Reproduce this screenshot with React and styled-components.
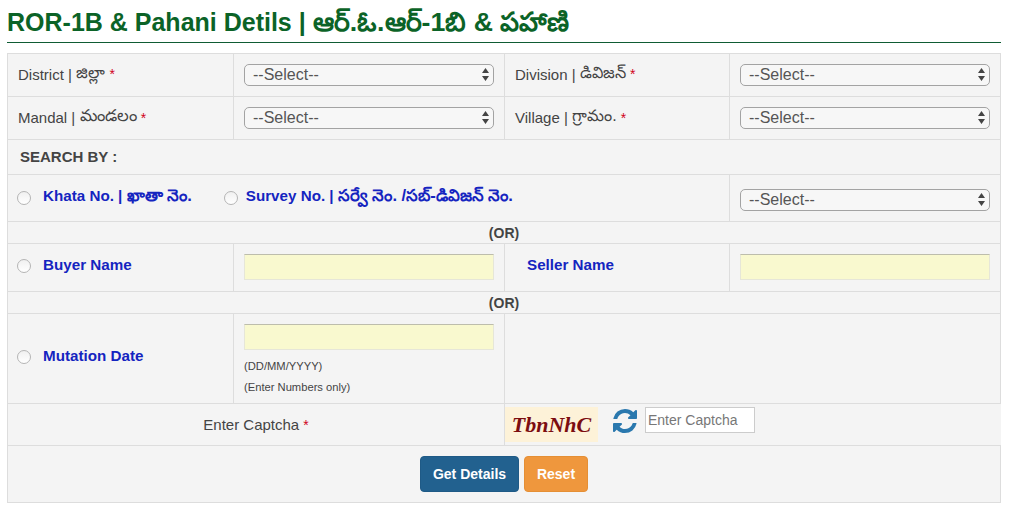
import React from "react";
import styled, { createGlobalStyle } from "styled-components";

const Global = createGlobalStyle`
  html, body { margin: 0; padding: 0; background: #fff; }
  body { font-family: "Liberation Sans", "Noto Sans", sans-serif; color: #444; }
  * { box-sizing: border-box; }
`;

const Page = styled.div`
  width: 1010px;
  height: 505px;
  padding: 0 9px 0 7px;
  overflow: hidden;
`;
const Title = styled.h1`
  margin: 0;
  height: 43px;
  padding-top: 6px;
  font-size: 25px;
  line-height: 32px;
  font-weight: 700;
  color: #0b6327;
  border-bottom: 1px solid #0f5c34;
  white-space: nowrap;
`;
const TitleTe = styled.span`
  font-size: 26.7px;
`;
const Te = styled.span`
  font-size: ${(p) => p.$scale || 1.07}em;
`;
const Form = styled.form`
  margin-top: 10px;
  border: 1px solid #ddd;
  border-width: 1px 1px 0 1px;
  background: #f4f4f4;
  font-size: 15px;
`;
const Row = styled.div`
  display: grid;
  grid-template-columns: ${(p) => p.$cols || "226px 271px 225px 1fr"};
  height: ${(p) => p.$h}px;
  border-bottom: 1px solid #ddd;
`;
const Cell = styled.div`
  display: flex;
  align-items: ${(p) => p.$align || "center"};
  justify-content: ${(p) => p.$justify || "flex-start"};
  padding: ${(p) => p.$pad || "0 10px"};
  border-right: ${(p) => (p.$last ? "none" : "1px solid #ddd")};
  margin-right: ${(p) => (p.$bleed ? "-1px" : "0")};
  background: ${(p) => (p.$bleed ? "#f4f4f4" : "transparent")};
  min-width: 0;
`;
const Req = styled.span`
  color: #d0021b;
  margin-left: 4px;
  font-size: 14px;
`;
const SelectBox = styled.div`
  position: relative;
  width: 250px;
  height: 22px;
`;
const Select = styled.select`
  appearance: none;
  width: 100%;
  height: 100%;
  padding: 0 20px 1px 8px;
  border: 1px solid #a3a3a3;
  border-radius: 5px;
  background: #f7f7f7;
  color: #555;
  font: 16px "Liberation Sans", sans-serif;
`;
const Arrows = styled.svg`
  position: absolute;
  right: 4px;
  top: 3px;
  width: 9px;
  height: 15px;
  pointer-events: none;
`;
const Section = styled.div`
  height: ${(p) => p.$h}px;
  display: flex;
  align-items: center;
  padding-left: ${(p) => p.$pl || 0}px;
  padding-bottom: ${(p) => p.$pb || 0}px;
  justify-content: ${(p) => (p.$center ? "center" : "flex-start")};
  border-bottom: 1px solid #ddd;
  font-weight: 700;
  font-size: ${(p) => p.$size || 14}px;
  color: #444;
`;
const Radio = styled.input.attrs({ type: "radio" })`
  appearance: none;
  flex: none;
  width: 14px;
  height: 14px;
  margin: 2px 0 0;
  border: 1px solid #b5b5b5;
  border-radius: 50%;
  background: linear-gradient(#f0f0f0, #fff);
`;
const Choice = styled.span`
  display: inline-flex;
  align-items: center;
  gap: ${(p) => p.$gap || 12}px;
  margin-right: ${(p) => p.$mr || 0}px;
`;
const BlueLabel = styled.label`
  color: #1424c0;
  font-weight: 700;
  font-size: 15.2px;
  white-space: nowrap;
`;
const TextField = styled.input`
  display: block;
  width: 250px;
  height: 26px;
  border: 1px solid #e6e6d8;
  border-top-color: #bdbdac;
  background: #f9f9cf;
  outline: none;
`;
const Hint = styled.div`
  font-size: 11.2px;
  line-height: 21px;
  color: #444;
`;
const DateCol = styled.div`
  display: flex;
  flex-direction: column;
  padding-top: 10px;
  ${Hint}:first-of-type { margin-top: 6px; }
`;
const CaptchaImage = styled.div`
  width: 93px;
  height: 35px;
  display: flex;
  align-items: center;
  justify-content: center;
  background: #fdf2d8;
  color: #7c0d10;
  font: italic 700 22px "Liberation Serif", serif;
`;
const CaptchaInput = styled.input`
  width: 110px;
  height: 26px;
  margin-top: -10px;
  padding: 0 2px;
  border: 1px solid #ccc;
  background: #fff;
  font: 14px "Liberation Sans", sans-serif;
  &::placeholder { color: #777; }
`;
const Refresh = styled.svg`
  width: 24px;
  height: 24px;
  fill: #2a78ae;
  margin: -8px 8px 0 15px;
`;
const Actions = styled.div`
  height: 57px;
  display: flex;
  align-items: center;
  justify-content: center;
  gap: 5px;
  border-bottom: 1px solid #ddd;
`;
const Button = styled.button`
  width: ${(p) => (p.$reset ? 64 : 99)}px;
  height: 36px;
  padding: 0;
  border: 1px solid ${(p) => (p.$reset ? "#e58f35" : "#1f5a86")};
  border-radius: 4px;
  background: ${(p) => (p.$reset ? "#ef973d" : "#22618f")};
  color: #fff;
  font: 700 14px "Liberation Sans", sans-serif;
`;

const Sel = () => (
  <SelectBox>
    <Select defaultValue="">
      <option value="">--Select--</option>
    </Select>
    <Arrows viewBox="0 0 9 15">
      <path d="M4.5 1 L8 6 H1 Z M4.5 14 L8 9 H1 Z" fill="#444" />
    </Arrows>
  </SelectBox>
);

export default function App() {
  return (
    <Page>
      <Global />
      <Title>ROR-1B &amp; Pahani Detils | <TitleTe>ఆర్.ఓ.ఆర్-1బి &amp; పహాణి</TitleTe></Title>
      <Form>
        <Row $h={43}>
          <Cell $pad="0 10px 2px">District | <Te>&nbsp;జిల్లా</Te> <Req>*</Req></Cell>
          <Cell><Sel /></Cell>
          <Cell $pad="0 10px 2px">Division | <Te>&nbsp;డివిజన్</Te> <Req>*</Req></Cell>
          <Cell $last><Sel /></Cell>
        </Row>
        <Row $h={43}>
          <Cell $pad="0 10px 1px">Mandal | <Te $scale={1.1}>&nbsp;మండలం</Te> <Req>*</Req></Cell>
          <Cell><Sel /></Cell>
          <Cell $pad="0 10px 1px">Village | <Te>&nbsp;గ్రామం.</Te> <Req>*</Req></Cell>
          <Cell $last><Sel /></Cell>
        </Row>
        <Section $h={35} $pl={12} $pb={1} $size={15}>SEARCH BY :</Section>
        <Row $h={47} $cols="722px 1fr">
          <Cell $pad="0 9px 2px">
            <Choice $mr={32}><Radio name="s" /><BlueLabel>Khata No. | <Te $scale={1.09}>ఖాతా నెం.</Te></BlueLabel></Choice>
            <Choice $gap={8}><Radio name="s" /><BlueLabel>Survey No. | <Te $scale={1.09}>సర్వే నెం. /సబ్-డివిజన్ నెం.</Te></BlueLabel></Choice>
          </Cell>
          <Cell $last $pad="3px 10px 0"><Sel /></Cell>
        </Row>
        <Section $h={22} $center>(OR)</Section>
        <Row $h={48}>
          <Cell $pad="0 9px 6px">
            <Choice><Radio name="s" /><BlueLabel>Buyer Name</BlueLabel></Choice>
          </Cell>
          <Cell $pad="0 10px 2px"><TextField /></Cell>
          <Cell $pad="0 22px 7px"><BlueLabel>Seller Name</BlueLabel></Cell>
          <Cell $last $pad="0 10px 2px"><TextField /></Cell>
        </Row>
        <Section $h={22} $center>(OR)</Section>
        <Row $h={90} $cols="226px 271px 1fr">
          <Cell $pad="0 9px 6px">
            <Choice><Radio name="s" /><BlueLabel>Mutation Date</BlueLabel></Choice>
          </Cell>
          <Cell $align="flex-start">
            <DateCol>
              <TextField />
              <Hint>(DD/MM/YYYY)</Hint>
              <Hint>(Enter Numbers only)</Hint>
            </DateCol>
          </Cell>
          <Cell $last />
        </Row>
        <Row $h={42} $cols="497px 1fr">
          <Cell $justify="center">Enter Captcha <Req>*</Req></Cell>
          <Cell $last $bleed $pad="0">
            <CaptchaImage>TbnNhC</CaptchaImage>
            <Refresh viewBox="128 128 1536 1536">
              <path d="M1639 1056q0 5-1 7-64 268-268 434.5t-478 166.5q-146 0-282.5-55t-243.5-157l-129 129q-19 19-45 19t-45-19-19-45v-448q0-26 19-45t45-19h448q26 0 45 19t19 45-19 45l-137 137q71 66 161 102t187 36q134 0 250-65t186-179q11-17 53-117 8-23 30-23h192q13 0 22.5 9.5t9.5 22.5zm25-800v448q0 26-19 45t-45 19h-448q-26 0-45-19t-19-45 19-45l138-138q-148-137-349-137-134 0-250 65t-186 179q-11 17-53 117-8 23-30 23h-199q-13 0-22.5-9.5t-9.5-22.5v-7q65-268 270-434.5t480-166.5q146 0 284 55.5t245 156.5l130-129q19-19 45-19t45 19 19 45z" />
            </Refresh>
            <CaptchaInput placeholder="Enter Captcha" />
          </Cell>
        </Row>
        <Actions>
          <Button type="button">Get Details</Button>
          <Button type="button" $reset>Reset</Button>
        </Actions>
      </Form>
    </Page>
  );
}
